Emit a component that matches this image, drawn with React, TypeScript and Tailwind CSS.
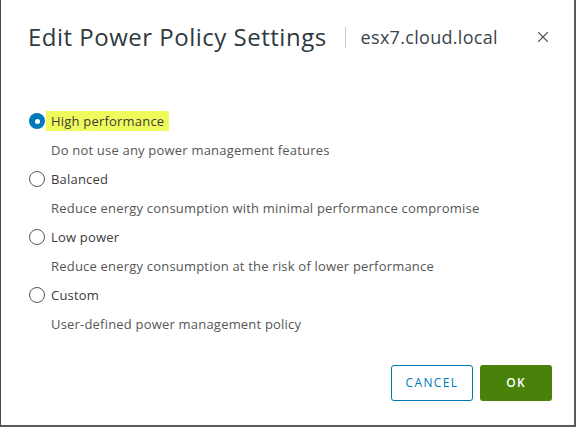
import { X } from "lucide-react";

const options = [
  { label: "High performance", desc: "Do not use any power management features", checked: true },
  { label: "Balanced", desc: "Reduce energy consumption with minimal performance compromise", checked: false },
  { label: "Low power", desc: "Reduce energy consumption at the risk of lower performance", checked: false },
  { label: "Custom", desc: "User-defined power management policy", checked: false },
];

const Radio = ({ checked }: { checked: boolean }) =>
  checked ? (
    <span className="flex h-4 w-4 shrink-0 items-center justify-center rounded-full bg-[#0079b8]">
      <span className="h-[5px] w-[5px] rounded-full bg-white" />
    </span>
  ) : (
    <span className="h-4 w-4 shrink-0 rounded-full border border-[#565656] bg-white" />
  );

export default function App() {
  return (
    <div className="h-[427px] w-[576px] bg-white font-['Open_Sans',sans-serif] text-[#313131]">
      <div className="flex h-full w-full flex-col border-l border-[#4a4a4a] border-r-2 border-b-2 border-r-[#5a5a5a] border-b-[#5a5a5a]">
        <div className="flex items-center pl-[27px] pr-[22px] pt-[22px]">
          <h1 className="text-[24px] leading-[30px] tracking-[0.5px] text-[#2f3a40]">
            Edit Power Policy Settings
          </h1>
          <span className="ml-[18px] h-[21px] w-px bg-[#c8c8c8]" />
          <span className="ml-[15px] text-[18px] tracking-[0.3px] text-[#3a4449]">esx7.cloud.local</span>
          <X className="ml-auto h-[18px] w-[18px] text-[#565656]" strokeWidth={1.5} />
        </div>

        <div className="mt-[59px] flex flex-col pl-[28px]">
          {options.map((o) => (
            <div key={o.label} className="flex h-[58px] flex-col">
              <div className="flex h-[20px] items-center">
                <Radio checked={o.checked} />
                <span
                  className={`ml-[1px] px-[5px] text-[13px] leading-[20px] tracking-[0.2px] text-[#3c3c3c] ${
                    o.checked ? "bg-[#eefb5b]" : ""
                  }`}
                >
                  {o.label}
                </span>
              </div>
              <div className="mt-[9px] pl-[22px] text-[13px] leading-[20px] tracking-[0.2px] text-[#565656]">{o.desc}</div>
            </div>
          ))}
        </div>

        <div className="mt-auto mb-[24px] flex justify-end gap-[7px] pr-[22px]">
          <button className="h-[36px] w-[82px] rounded-[3px] border border-[#0079b8] text-[12px] font-medium tracking-[1.4px] text-[#0079b8]">
            CANCEL
          </button>
          <button className="h-[36px] w-[72px] rounded-[3px] bg-[#48820b] text-[12px] font-semibold tracking-[1.2px] text-white">
            OK
          </button>
        </div>
      </div>
    </div>
  );
}
